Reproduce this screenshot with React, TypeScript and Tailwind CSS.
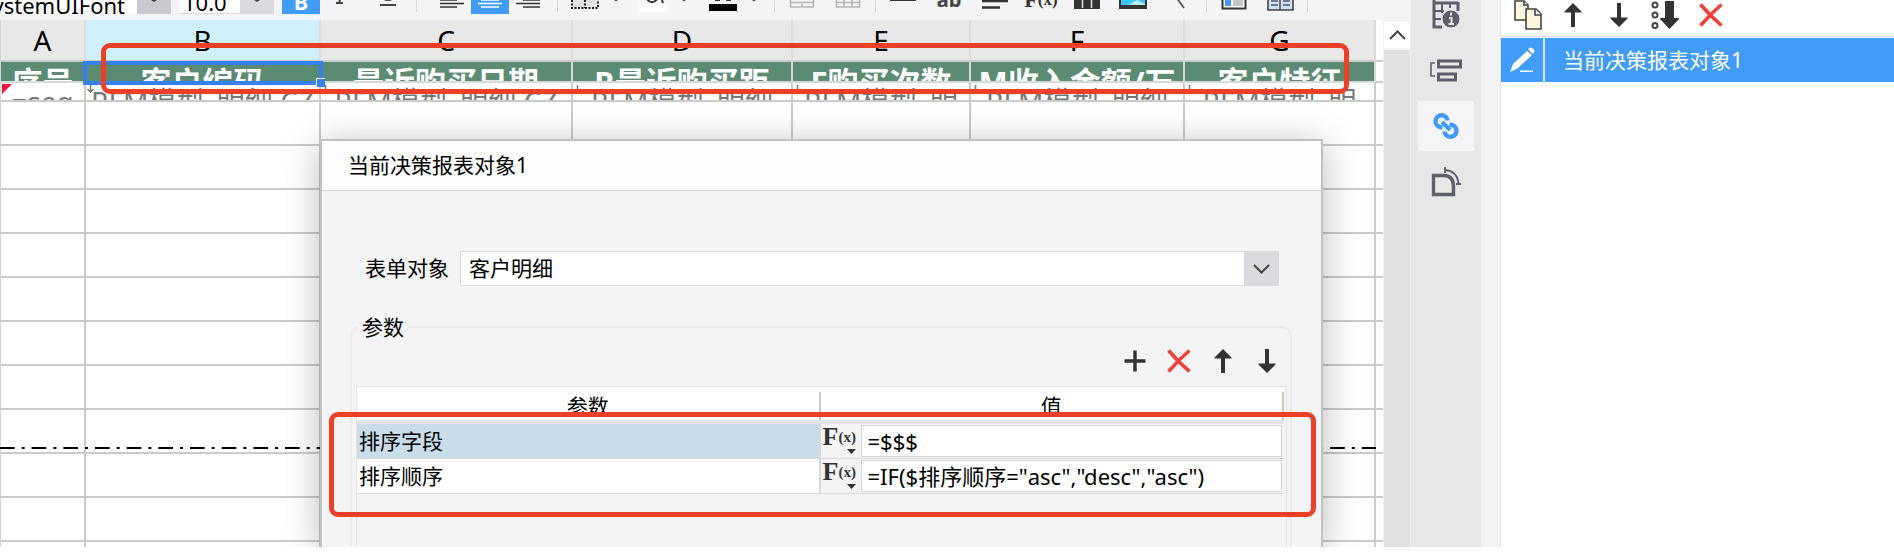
import { useState } from 'react';
import type { ReactNode } from 'react';

const COLUMNS = [
  { letter: 'A', title: '序号', value: '=seq' },
  { letter: 'B', title: '客户编码', value: 'RFM模型_明细.CZ' },
  { letter: 'C', title: '最近购买日期', value: 'RFM模型_明细.CZ' },
  { letter: 'D', title: 'R最近购买距', value: 'RFM模型_明细' },
  { letter: 'E', title: 'F购买次数', value: 'RFM模型_明' },
  { letter: 'F', title: 'M收入金额/万', value: 'RFM模型_明细' },
  { letter: 'G', title: '客户特征', value: 'RFM模型_明' },
];

const EMPTY_ROWS = Array.from({ length: 11 }, (_, i) => i);

function Separator() {
  return <div className="mx-1 h-3 w-px shrink-0 self-start bg-[#d8d9dc]" />;
}

function Tool({ label, children }: { label: string; children: ReactNode }) {
  return (
    <button aria-label={label} className="flex h-5 w-[46px] shrink-0 justify-center">
      <svg width="30" height="20" viewBox="0 0 30 20" fill="none">
        {children}
      </svg>
    </button>
  );
}

function DropDot({ label }: { label: string }) {
  return (
    <button aria-label={label} className="flex h-5 w-4 shrink-0 justify-center">
      <svg width="8" height="4" viewBox="0 0 8 4">
        <path d="M2 0h4L4 1.5z" fill="#555" />
      </svg>
    </button>
  );
}

function ArrowUp() {
  return (
    <svg width="24" height="24" viewBox="0 0 24 24" fill="#333">
      <path d="M12 0l8.500 8.500v1H14V24h-4V9.500H3.500v-1z" />
    </svg>
  );
}

function ArrowDown() {
  return (
    <svg width="24" height="24" viewBox="0 0 24 24" fill="#333">
      <path d="M10 0h4v14.500h6.500v1L12 24l-8.500-8.500v-1H10z" />
    </svg>
  );
}

function Cross() {
  return (
    <svg width="24" height="24" viewBox="0 0 24 24" fill="none" stroke="#ee4238" strokeWidth="3.6">
      <path d="M1.5 1.5c6 7 14 15 21 21M22.5 1.5c-7 6-15 14-21 21" />
    </svg>
  );
}

function Toolbar() {
  return (
    <div className="flex h-5 shrink-0 overflow-hidden bg-[#f4f4f7] text-[22px] text-black">
      <div className="flex h-[14px] w-[171px] shrink-0">
        <div className="flex h-[14px] flex-1 items-end justify-end overflow-hidden bg-white pr-3 leading-[18px]">SystemUIFont</div>
        <button aria-label="字体" className="flex h-[14px] w-[34px] justify-center bg-[#c8cacf]">
          <svg width="8" height="4" viewBox="0 0 8 4"><path d="M1 0h6L4 2z" fill="#444" /></svg>
        </button>
      </div>
      <div className="ml-2 flex h-[14px] w-[95px] shrink-0">
        <div className="flex h-[14px] flex-1 items-end overflow-hidden border-b border-[#dcdcdf] bg-white pl-1 leading-[22px]">10.0</div>
        <button aria-label="字号" className="flex h-[14px] w-[34px] justify-center bg-[#d9dadd]">
          <svg width="8" height="4" viewBox="0 0 8 4"><path d="M1 0h6L4 2z" fill="#444" /></svg>
        </button>
      </div>
      <button aria-label="加粗" className="ml-2 flex h-[14px] w-[38px] shrink-0 items-end justify-center overflow-hidden bg-[#409bf9] font-bold leading-[26px] text-white">
        B
      </button>
      <Tool label="斜体">
        <path d="M13 -4l-2 7M8 3h7" stroke="#444" strokeWidth="2" />
      </Tool>
      <Tool label="下划线">
        <path d="M8 -6q0 6 6 6t6-6M6 5h16" stroke="#444" strokeWidth="2" />
      </Tool>
      <Separator />
      <button aria-label="左对齐" className="ml-3 flex h-5 w-[38px] shrink-0 justify-center">
        <svg width="26" height="10" viewBox="0 0 26 10" stroke="#333" strokeWidth="1.6">
          <path d="M1 0h17M1 3.5h24M1 7h17" />
        </svg>
      </button>
      <button aria-label="居中" className="flex h-[14px] w-[38px] shrink-0 justify-center bg-[#409bf9]">
        <svg width="26" height="10" viewBox="0 0 26 10" stroke="#fff" strokeWidth="1.6">
          <path d="M4 0h18M1 3.5h24M4 7h18" />
        </svg>
      </button>
      <button aria-label="右对齐" className="flex h-5 w-[38px] shrink-0 justify-center">
        <svg width="26" height="10" viewBox="0 0 26 10" stroke="#333" strokeWidth="1.6">
          <path d="M8 0h17M1 3.5h24M8 7h17" />
        </svg>
      </button>
      <div className="w-1.5 shrink-0" />
      <Separator />
      <Tool label="边框">
        <path d="M2 0h26v8H2z" fill="#e3e3e5" />
        <path d="M2 0v8h26V0M15 0v8" stroke="#222" strokeWidth="2" strokeDasharray="2 1.5" />
      </Tool>
      <DropDot label="边框样式" />
      <div className="w-1.5 shrink-0" />
      <Tool label="填充颜色">
        <path d="M1 4h28v8H1z" fill="#fff" />
        <path d="M9 -1q5 7 11-1M24 0l1 3" stroke="#333" strokeWidth="2" />
      </Tool>
      <DropDot label="选择填充颜色" />
      <div className="w-2 shrink-0" />
      <Tool label="文字颜色">
        <path d="M1 4h28v7H1z" fill="#000" />
        <path d="M7 0h5M18 0h5" stroke="#333" strokeWidth="2" />
      </Tool>
      <DropDot label="选择文字颜色" />
      <div className="w-2 shrink-0" />
      <Separator />
      <Tool label="合并单元格">
        <path d="M3.5 -2v9h23v-9M3.5 2.5h23M15 4v2" stroke="#b5b5b8" strokeWidth="1.6" />
      </Tool>
      <Tool label="取消合并">
        <path d="M3.5 -2v9h23v-9M3.5 2.5h23M11 -2v9M19 -2v9" stroke="#b5b5b8" strokeWidth="1.6" />
      </Tool>
      <Separator />
      <Tool label="横线">
        <path d="M2 0h26" stroke="#333" strokeWidth="2" />
      </Tool>
      <button aria-label="文本" className="flex h-5 w-[46px] shrink-0 justify-center overflow-hidden text-[20px] font-bold leading-[0px] text-[#444]">
        ab
      </button>
      <Tool label="富文本">
        <path d="M2 1h26M2 7.500h18" stroke="#333" strokeWidth="2.6" />
      </Tool>
      <button aria-label="公式" className="flex h-5 w-[46px] shrink-0 justify-center overflow-hidden font-['Liberation_Serif',serif] text-[22px] font-bold leading-[0px] text-[#333]">
        F<span className="text-[17px]">(x)</span>
      </button>
      <Tool label="图表">
        <path d="M2 -2h26V9H2z" fill="#333" />
        <path d="M10.500 0v8M19.500 0v8" stroke="#ddd" strokeWidth="1.6" />
      </Tool>
      <Tool label="图片">
        <path d="M1 -2h28V9H1z" fill="#333" />
        <path d="M3 -2h24v7H3z" fill="#3fc3fb" />
        <path d="M10 5l9-5 8 4v1z" fill="#b6f0ff" />
      </Tool>
      <Tool label="斜线">
        <path d="M12 -3l8 11" stroke="#555" strokeWidth="1.8" />
      </Tool>
      <Separator />
      <Tool label="冻结">
        <path d="M3.500 -2v10.500h23V-2" fill="#fff" stroke="#333" strokeWidth="2" />
        <path d="M6 0h6v6H6z" fill="#409bf9" />
        <path d="M14 0h10v6H14z" fill="#c5c6ca" />
      </Tool>
      <Tool label="分栏">
        <path d="M3 -2v12h25V-2" fill="#cfe0fb" stroke="#444" strokeWidth="1.6" />
        <path d="M15 0v10M6 1h7M6 5h7M18 1h7M18 5h7" stroke="#555" strokeWidth="1.600" />
      </Tool>
      <Separator />
    </div>
  );
}

function Sheet() {
  return (
    <table className="w-full table-fixed border-separate border-spacing-0 bg-white">
      <colgroup>
        <col className="w-[85px]" />
        <col className="w-[235px]" />
        <col className="w-[252px]" />
        <col className="w-[220px]" />
        <col className="w-[178px]" />
        <col className="w-[214px]" />
        <col className="w-[191px]" />
        <col />
      </colgroup>
      <thead>
        <tr className="h-[42px] text-[28px] leading-[40px] text-black">
          {COLUMNS.map((col) => (
            <th
              key={col.letter}
              className={`border-r-2 border-b-2 border-b-[#cbcbcb] border-r-[#d9dbdf] p-0 font-normal ${
                col.letter === 'B' ? 'bg-[#cfeffb]' : 'bg-[#e8e8e8]'
              }`}
            >
              {col.letter}
            </th>
          ))}
          <td className="border-b-2 border-[#cbcbcb] p-0" />
        </tr>
      </thead>
      <tbody>
        <tr className="h-[21px]">
          {COLUMNS.map((col) => (
            <td
              key={col.letter}
              className="relative border-r-2 border-b-2 border-[#d6dad8] bg-[#5b8b72] p-0 text-center text-[31px] font-bold text-white"
            >
              <div className="h-[19px] overflow-hidden whitespace-nowrap pt-1 leading-[32px]">{col.title}</div>
              {col.letter === 'B' && (
                <div className="absolute -top-px -right-1 -bottom-1 -left-[3px] z-10 border-4 border-[#3380ee]">
                  <div className="absolute -right-1.5 -bottom-1.5 h-[9px] w-[9px] border-t border-l border-white bg-[#3380ee]" />
                </div>
              )}
            </td>
          ))}
          <td className="border-b-2 border-[#cbcbcb] p-0" />
        </tr>
        <tr className="h-[19px]">
          {COLUMNS.map((col) => (
            <td key={col.letter} className="relative border-r-2 border-b-2 border-[#cbcbcb] p-0 text-center text-[28px] text-[#777]">
              <div className="h-[17px] overflow-hidden whitespace-nowrap pt-px leading-[34px]">{col.value}</div>
              <svg className="absolute top-px left-0" width="12" height="11" viewBox="0 0 12 11">
                {col.letter === 'A' ? (
                  <path d="M1 0h10L1 10z" fill="#f5103c" />
                ) : (
                  <path d="M4.500 1v7M1.500 5l3 3 3-3" fill="none" stroke="#777" strokeWidth="1.500" />
                )}
              </svg>
            </td>
          ))}
          <td className="border-b-2 border-[#cbcbcb] p-0" />
        </tr>
        {EMPTY_ROWS.map((row) => (
          <tr key={row} className="h-11">
            {COLUMNS.map((col) => (
              <td key={col.letter} className="border-r-2 border-b-2 border-[#cbcbcb] p-0" />
            ))}
            <td className="border-b-2 border-[#cbcbcb] p-0" />
          </tr>
        ))}
      </tbody>
    </table>
  );
}

function ParamRow({ name, value, selected }: { name: string; value: string; selected?: boolean }) {
  const [text, setText] = useState(value);
  return (
    <tr className="h-[35px]">
      <td className={`border-r-2 border-b border-[#d8d8da] p-0 pl-0.5 leading-[34px] ${selected ? 'bg-[#c8dce9]' : 'bg-white'}`}>
        {name}
      </td>
      <td className="border-b border-[#d8d8da] p-0">
        <div className="flex h-[34px]">
          <button
            aria-label={`${name} 公式`}
            className="flex w-10 shrink-0 flex-col pl-0.5 font-['Liberation_Serif',serif] text-[#333]"
          >
            <span className="flex h-[25px] items-center text-[26px] font-bold leading-[24px]">
              F<span className="text-[15px]">(x)</span>
            </span>
            <svg className="ml-6" width="9" height="5" viewBox="0 0 9 5">
              <path d="M0 0h9L4.500 5z" fill="#333" />
            </svg>
          </button>
          <input
            aria-label={name}
            value={text}
            onChange={(e) => setText(e.target.value)}
            className="mt-px mr-0.5 h-[32px] min-w-0 flex-1 border border-[#d5d6d9] bg-white pl-1.5 text-[22px] text-black outline-none"
          />
        </div>
      </td>
    </tr>
  );
}

function ParamDialog() {
  return (
    <section
      aria-label="当前决策报表对象1"
      className="absolute top-[139px] right-[88px] bottom-0 left-[320px] z-20 flex flex-col border-2 border-b-0 border-[#c2c2c4] bg-[#f4f4f7] text-[21px] text-black shadow-[0_6px_36px_rgba(0,0,0,0.28)]"
    >
      <h2 className="h-[50px] shrink-0 border-b border-[#d4d5d8] bg-[#fdfdfd] pl-[26px] leading-[49px]">当前决策报表对象1</h2>
      <div className="mt-[60px] flex h-[35px] shrink-0 items-center pr-[42px] pl-[43px]">
        <label htmlFor="form-object" className="w-[95px] shrink-0">
          表单对象
        </label>
        <div className="relative h-[35px] flex-1">
          <select
            id="form-object"
            className="h-full w-full appearance-none border border-[#d8d9dc] bg-white pl-2 leading-[33px] outline-none"
          >
            <option>客户明细</option>
          </select>
          <span className="pointer-events-none absolute top-0 right-0 flex h-full w-[35px] items-center justify-center bg-[#d9dadd]">
            <svg width="17" height="10" viewBox="0 0 17 10" fill="none" stroke="#444" strokeWidth="2">
              <path d="M1 1l7.500 7.500L16 1" />
            </svg>
          </span>
        </div>
      </div>
      <fieldset className="mt-[27px] mr-[29px] -mb-3 ml-7 flex min-h-0 flex-1 flex-col rounded-[10px] border-2 border-[#ebebee] pr-[3px] pl-1">
        <legend className="ml-0.5 px-1 leading-[28px]">参数</legend>
        <div className="flex justify-end gap-5 pt-2 pr-[8px]">
          <button aria-label="添加">
            <svg width="24" height="24" viewBox="0 0 24 24" stroke="#333" strokeWidth="3.400">
              <path d="M12 1.500v21M1.500 12h21" />
            </svg>
          </button>
          <button aria-label="删除"><Cross /></button>
          <button aria-label="上移"><ArrowUp /></button>
          <button aria-label="下移"><ArrowDown /></button>
        </div>
        <div className="mt-[13px] flex-1 border border-[#e4e4e7] pr-0.5">
          <table className="w-full table-fixed border-separate border-spacing-0">
            <colgroup>
              <col className="w-1/2" />
              <col className="w-1/2" />
            </colgroup>
            <thead>
              <tr className="h-[37px] bg-white">
                <th className="border-b-4 border-[#e2e2e4] p-0 pt-1 font-normal leading-[28px]">
                  <div className="border-r-2 border-[#c9c7bf]">参数</div>
                </th>
                <th className="border-b-4 border-[#e2e2e4] p-0 pt-1 font-normal leading-[28px]">
                  <div className="border-r-2 border-[#c9c7bf]">值</div>
                </th>
              </tr>
            </thead>
            <tbody>
              <ParamRow name="排序字段" value="=$$$" selected />
              <ParamRow name="排序顺序" value={'=IF($排序顺序="asc","desc","asc")'} />
            </tbody>
          </table>
        </div>
      </fieldset>
      {/* highlight around the parameter rows */}
      <div className="pointer-events-none absolute top-[271px] right-[5px] left-[7px] h-[105px] rounded-[9px] border-[5px] border-[#eb4026]" />
    </section>
  );
}

function SideRail() {
  return (
    <nav className="flex w-[70px] shrink-0 flex-col items-center gap-1.5 overflow-hidden bg-[#e7e7e7]">
      <button aria-label="单元格属性" className="-mt-[11px] flex h-[50px] w-14 shrink-0 items-center justify-center">
        <svg width="30" height="30" viewBox="0 0 30 30" fill="none" stroke="#5d606b">
          <path d="M3 0v28h8M27 12V3M3 4h24" strokeWidth="3" />
          <path d="M3 12h10M3 20h7M11 3v11M19 3v6" strokeWidth="2" />
          <circle cx="20" cy="20" r="9" fill="#5d606b" stroke="#e7e7e7" strokeWidth="1" />
          <path d="M20 13.500v3M18 19h2.500v6M17.500 25h5.500" stroke="#e7e7e7" strokeWidth="2" />
        </svg>
      </button>
      <button aria-label="控件设置" className="flex h-[50px] w-14 shrink-0 items-center justify-center">
        <svg width="32" height="24" viewBox="0 0 32 24" fill="none" stroke="#5d606b">
          <path d="M5 5H1v13h4" strokeWidth="1.600" />
          <path d="M8.500 3h22v6h-22zM8.500 16h17v6h-17z" strokeWidth="3" />
        </svg>
      </button>
      <button aria-label="超级链接" className="flex h-[50px] w-14 shrink-0 items-center justify-center bg-[#f5f5f8]">
        <svg width="28" height="28" viewBox="0 0 28 28" fill="none" stroke="#409bf9" strokeWidth="4.400">
          <path d="M10.500 15.500l-2.500-.5A6 6 0 1 1 15.500 8.500" />
          <path d="M17.500 12.500l2.500.5A6 6 0 1 1 12.500 19.500" />
          <path d="M10 10l8 8" strokeWidth="4" />
        </svg>
      </button>
      <button aria-label="条件属性" className="flex h-[50px] w-14 shrink-0 items-center justify-center">
        <svg width="30" height="30" viewBox="0 0 30 30" fill="none" stroke="#5d606b">
          <path d="M2.500 8.500h10q10 0 10 11v8h-20z" strokeWidth="3.400" />
          <path d="M14 0v6M14 3q12 1 13.500 13M25 17h5" strokeWidth="1.800" />
        </svg>
      </button>
    </nav>
  );
}

function LinkPanel() {
  return (
    <aside className="flex w-[394px] shrink-0 flex-col border-l border-[#e2e2e4] bg-white">
      <div className="flex h-[37px] shrink-0 border-b border-[#d8d8da] pl-1">
        <button aria-label="复制" className="flex h-[30px] w-[45px] items-center justify-center">
          <svg width="28" height="30" viewBox="0 0 28 30" fill="#fdf6de" stroke="#444" strokeWidth="1.600">
            <path d="M1 1h9l4 4v15H1z" />
            <path d="M10 1v4h4" />
            <path d="M12 9h10l5 5v15H12z" />
            <path d="M21 9v6h6" fill="#fff" />
          </svg>
        </button>
        <button aria-label="上移" className="flex h-[30px] w-[46px] items-center justify-center"><ArrowUp /></button>
        <button aria-label="下移" className="flex h-[30px] w-[46px] items-center justify-center"><ArrowDown /></button>
        <button aria-label="排序" className="flex h-[30px] w-[46px] items-center justify-center">
          <svg width="30" height="30" viewBox="0 0 30 30">
            <g fill="none" stroke="#444" strokeWidth="2">
              <circle cx="5" cy="5" r="2.500" />
              <circle cx="5" cy="15" r="2.500" />
              <circle cx="5" cy="25.500" r="2.500" />
            </g>
            <path d="M15 1h9v17h5v1l-9.500 10L10 19v-1h5z" fill="#333" />
          </svg>
        </button>
        <button aria-label="删除" className="flex h-[30px] w-[46px] items-center justify-center"><Cross /></button>
      </div>
      <div className="mt-px flex h-[44px] shrink-0 bg-[#419bf9]">
        <button aria-label="编辑" className="flex w-[44px] shrink-0 items-center justify-center border-r-2 border-[#d6e6f8]">
          <svg width="26" height="26" viewBox="0 0 26 26" fill="#fff">
            <path d="M18 4l5 4L9 21l-8 4 3-8zM19 2l2-1.500q4 0 4.500 4L24 7z" />
            <path d="M11 23.500h13V25H11z" />
          </svg>
        </button>
        <span className="pl-[18px] text-[21px] leading-[44px] text-white">当前决策报表对象1</span>
      </div>
    </aside>
  );
}

function App() {
  return (
    <div className="flex h-screen overflow-hidden bg-white pb-[9px] font-['Noto_Sans','Noto_Sans_CJK_SC',sans-serif]">
      <main className="relative flex min-w-0 flex-1 flex-col overflow-hidden">
        <Toolbar />
        <div className="flex min-h-0 flex-1">
          <div className="min-w-0 flex-1 overflow-hidden border-l border-[#d5d5d8]">
            <Sheet />
          </div>
          <div className="flex w-7 shrink-0 flex-col border-x border-[#f0f0f2] bg-[#e1e1e1]">
            <button aria-label="向上滚动" className="flex h-[30px] items-center justify-center border-y-2 border-[#f4f4f7] bg-white">
              <svg width="17" height="10" viewBox="0 0 17 10" fill="none" stroke="#444" strokeWidth="2">
                <path d="M1 9l7.500-7.500L16 9" />
              </svg>
            </button>
          </div>
        </div>
        {/* page break */}
        <svg className="absolute top-[447px] left-0 h-[2px] w-[1376px]">
          <path d="M0 1h1376" stroke="#000" strokeWidth="2" strokeDasharray="14.670 7 3 7" />
        </svg>
        <ParamDialog />
        {/* highlight around the column titles */}
        <div className="pointer-events-none absolute top-[43px] right-[62px] left-[101px] z-30 h-[51px] rounded-[9px] border-[5px] border-[#eb4026]" />
      </main>
      <SideRail />
      <div className="w-[19px] shrink-0 bg-[#f3f3f6]" />
      <LinkPanel />
    </div>
  );
}

export default App;
